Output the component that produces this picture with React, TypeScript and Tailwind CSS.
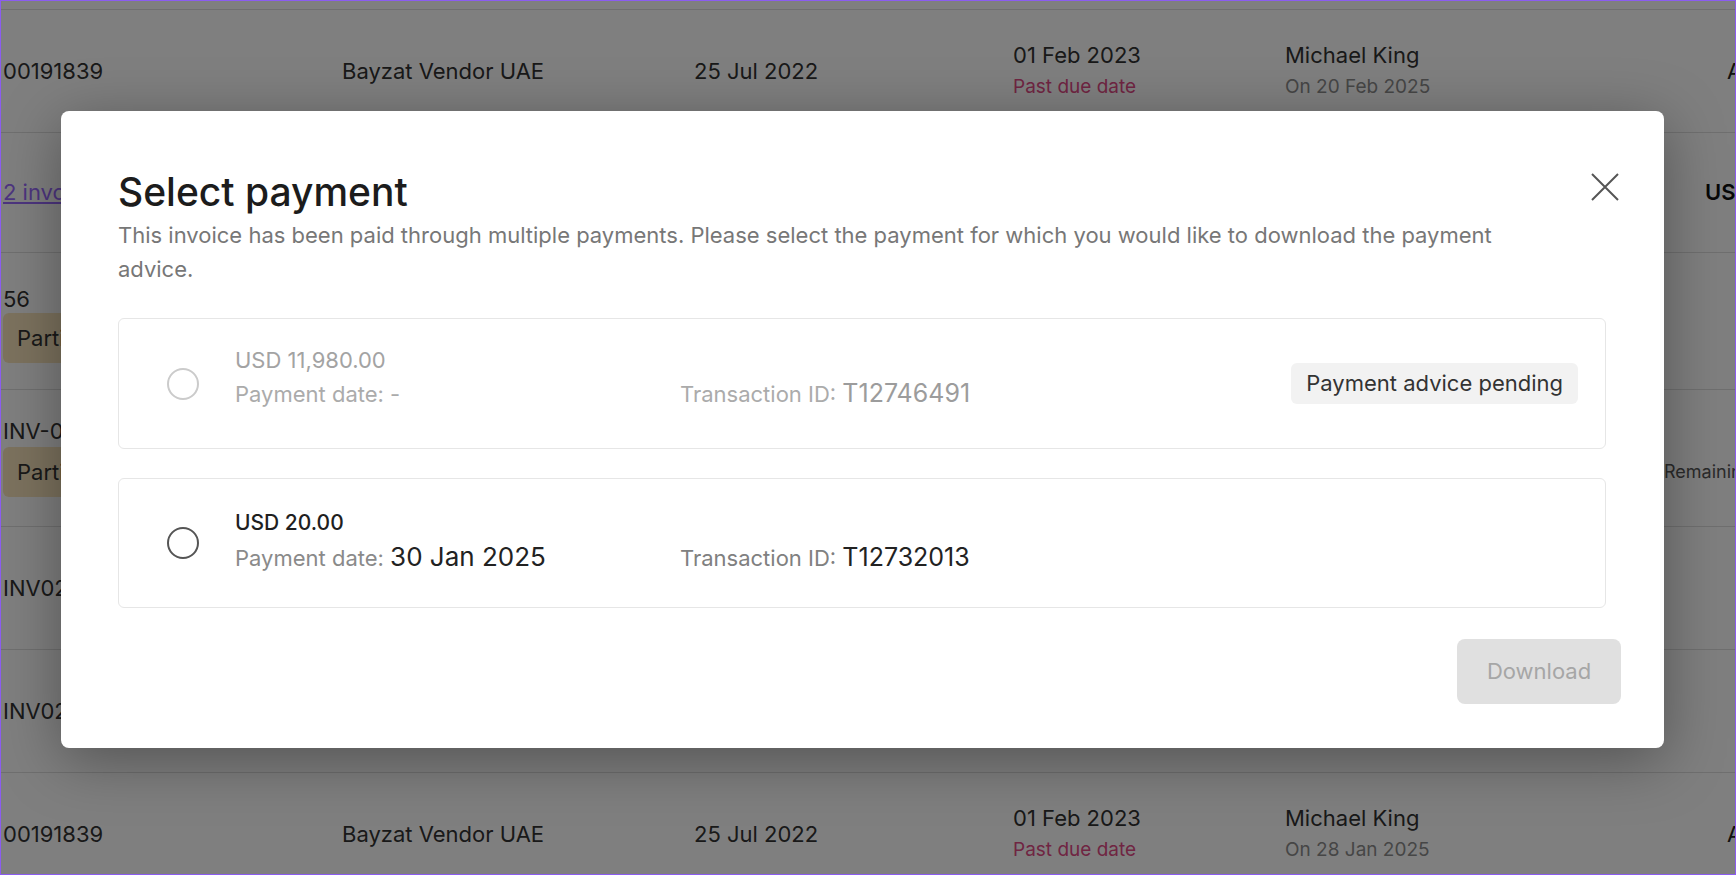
import React from 'react';

type Cell = { main?: React.ReactNode; sub?: React.ReactNode };

function TableRow({ height, cells }: { height: string; cells: Cell[] }) {
  return (
    <div className={`grid grid-cols-[342px_352px_319px_272px_379px_1fr] border-b border-[#dedede] ${height}`}>
      {cells.map((c, i) => (
        <div key={i} className={`flex flex-col justify-center whitespace-nowrap ${i === 0 ? 'pl-[3px]' : ''}`}>
          {c.main}
          {c.sub}
        </div>
      ))}
    </div>
  );
}

function Radio({ active }: { active: boolean }) {
  return (
    <div
      className={`h-[32px] w-[32px] shrink-0 rounded-full border-2 ${active ? 'border-[#555555]' : 'border-[#cbcbcb]'}`}
    />
  );
}

export default function App() {
  const main = (t: string) => <span className="text-[22px] leading-[32px] text-[#333333]">{t}</span>;
  const sub = (t: string, color = 'text-[#8c8c8c]') => (
    <span className={`text-[19px] leading-[32px] ${color}`}>{t}</span>
  );
  const badge = (t: string, extra = '') => (
    <span
      className={`inline-flex h-[50px] w-fit items-center rounded-md bg-[#f9e4bd] pl-[14px] pr-[16px] text-[22px] text-[#333333] ${extra}`}
    >
      {t}
    </span>
  );

  return (
    <div className="relative h-[875px] w-[1736px] overflow-hidden bg-white font-['Inter',sans-serif]">
      <div className="h-[10px] border-b border-[#dedede]" />
      <TableRow
        height="h-[123px]"
        cells={[
          { main: main('00191839') },
          { main: main('Bayzat Vendor UAE') },
          { main: main('25 Jul 2022') },
          { main: main('01 Feb 2023'), sub: sub('Past due date', 'text-[#e04a85]') },
          { main: main('Michael King'), sub: sub('On 20 Feb 2025') },
          { main: <span className="pl-[63px] text-[22px] text-[#222222]">Approved</span> },
        ]}
      />
      <TableRow
        height="h-[120px]"
        cells={[
          { main: <span className="text-[22px] text-[#9b6bff] underline">2 invoices</span> },
          { main: main('Bayzat Vendor UAE') },
          { main: main('25 Jul 2022') },
          { main: main('01 Feb 2023') },
          { main: main('Michael King') },
          { main: <span className="pl-[41px] text-[22px] font-semibold text-[#111111]">USD 11,980.00</span> },
        ]}
      />
      <TableRow
        height="h-[137px]"
        cells={[
          {
            main: <span className="mt-[8px] text-[22px] leading-[24px] text-[#333333]">56</span>,
            sub: badge('Partially paid', 'mt-[2px]'),
          },
          { main: main('Bayzat Vendor UAE') },
          { main: main('25 Jul 2022') },
          { main: main('01 Feb 2023') },
          { main: main('Michael King') },
          { main: null },
        ]}
      />
      <TableRow
        height="h-[137px]"
        cells={[
          {
            main: <span className="text-[22px] leading-[24px] text-[#333333]">INV-00191840</span>,
            sub: badge('Partially paid', 'mt-[4px]'),
          },
          { main: main('Bayzat Vendor UAE') },
          { main: main('25 Jul 2022') },
          { main: main('01 Feb 2023') },
          { main: main('Michael King') },
          { main: <span className="pt-[26px] text-[18px] text-[#555555]">Remaining</span> },
        ]}
      />
      <TableRow
        height="h-[123px]"
        cells={[
          { main: main('INV02345671') },
          { main: main('Bayzat Vendor UAE') },
          { main: main('25 Jul 2022') },
          { main: main('01 Feb 2023') },
          { main: main('Michael King') },
          { main: null },
        ]}
      />
      <TableRow
        height="h-[123px]"
        cells={[
          { main: main('INV02345672') },
          { main: main('Bayzat Vendor UAE') },
          { main: main('25 Jul 2022') },
          { main: main('01 Feb 2023') },
          { main: main('Michael King') },
          { main: null },
        ]}
      />
      <TableRow
        height="h-[123px]"
        cells={[
          { main: main('00191839') },
          { main: main('Bayzat Vendor UAE') },
          { main: main('25 Jul 2022') },
          { main: main('01 Feb 2023'), sub: sub('Past due date', 'text-[#e04a85]') },
          { main: main('Michael King'), sub: sub('On 28 Jan 2025') },
          { main: <span className="pl-[63px] text-[22px] text-[#222222]">Approved</span> },
        ]}
      />

      {/* backdrop */}
      <div className="absolute inset-0 bg-black/50" />

      {/* modal */}
      <div className="absolute left-[61px] top-[111px] h-[637px] w-[1603px] rounded-lg bg-white pl-[57px] pr-[43px] pt-[59px] shadow-[0_12px_60px_rgba(0,0,0,0.35)]">
        <button className="absolute right-[44px] top-[61px] text-[#555555]" aria-label="Close">
          <svg width="30" height="30" viewBox="0 0 30 30" fill="none" stroke="currentColor" strokeWidth="2">
            <path d="M2 2 L28 28 M28 2 L2 28" />
          </svg>
        </button>

        <h2 className="text-[39px] font-medium leading-[44px] text-[#1c1c1c]">Select payment</h2>
        <p className="mt-[4px] max-w-[1440px] text-[22px] leading-[34px] text-[#777777]">
          This invoice has been paid through multiple payments. Please select the payment for which you would like to
          download the payment advice.
        </p>

        <div className="mr-[15px] mt-[32px] flex flex-col gap-[29px]">
          <div className="flex h-[131px] items-center rounded-md border border-[#e6e6e6] pl-[48px] pr-[27px]">
            <Radio active={false} />
            <div className="ml-[36px] grid self-start pt-[26px] grid-cols-[445px_auto] items-baseline">
              <span className="col-span-2 text-[22px] leading-[30px] text-[#a3a3a3]">USD 11,980.00</span>
              <span className="mt-[3px] text-[22px] leading-[30px] text-[#ababab]">Payment date: -</span>
              <span className="mt-[3px] text-[22px] leading-[30px] text-[#ababab]">
                Transaction ID: <span className="text-[25px] text-[#9c9c9c]">T12746491</span>
              </span>
            </div>
            <span className="ml-auto flex h-[41px] items-center rounded-md bg-[#f2f2f2] px-[15px] text-[22px] text-[#333333]">
              Payment advice pending
            </span>
          </div>

          <div className="flex h-[130px] items-center rounded-md border border-[#e6e6e6] pl-[48px] pr-[27px]">
            <Radio active />
            <div className="ml-[36px] grid self-start pt-[29px] grid-cols-[445px_auto] items-baseline">
              <span className="col-span-2 text-[21px] font-medium leading-[30px] text-[#1f1f1f]">USD 20.00</span>
              <span className="mt-[1px] text-[22px] leading-[36px] text-[#8a8a8a]">
                Payment date: <span className="text-[26px] text-[#222222]">30 Jan 2025</span>
              </span>
              <span className="mt-[1px] text-[22px] leading-[36px] text-[#808080]">
                Transaction ID: <span className="text-[25px] text-[#222222]">T12732013</span>
              </span>
            </div>
          </div>
        </div>

        <div className="mt-[31px] flex justify-end">
          <button className="h-[65px] w-[164px] rounded-lg bg-[#e0e0e0] text-[22px] text-[#a6a6a6]">Download</button>
        </div>
      </div>

      {/* screenshot frame */}
      <div className="pointer-events-none absolute inset-0 border border-[#8b5cf0]" />
    </div>
  );
}
